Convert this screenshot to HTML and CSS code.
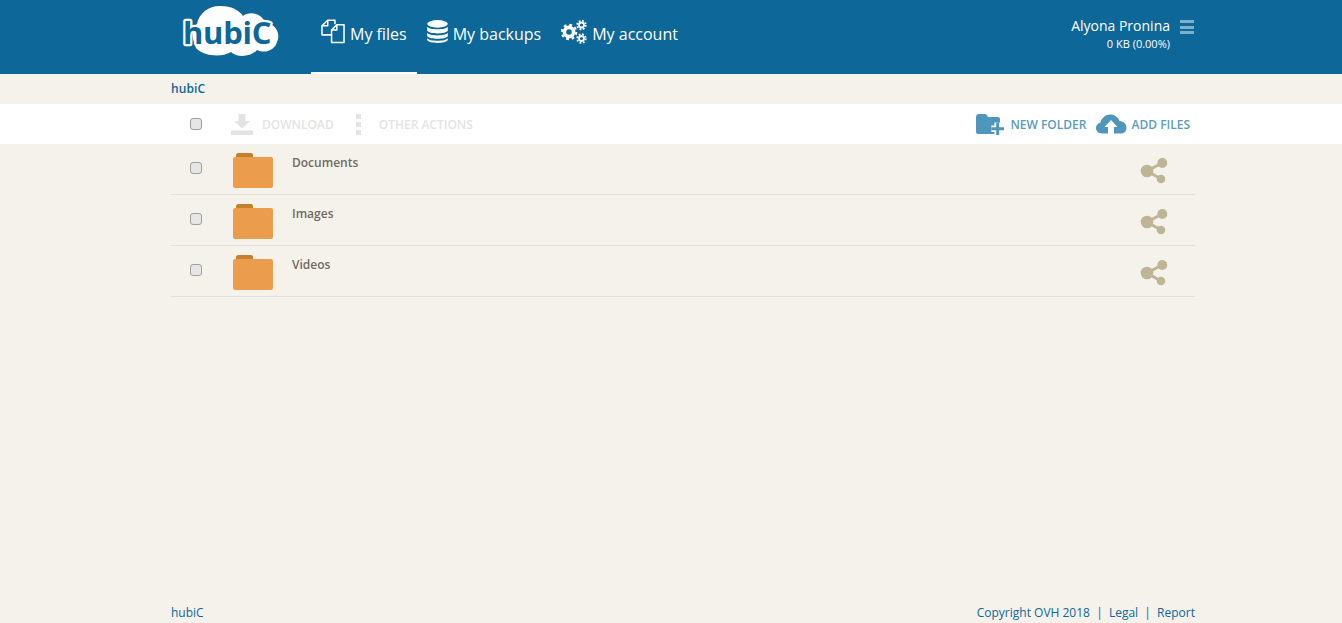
FILE: index.html
```html
<!DOCTYPE html>
<html lang="en">
<head>
<meta charset="utf-8">
<title>hubiC</title>
<link rel="stylesheet" href="styles.css">
</head>
<body>
<svg class="defs" width="0" height="0" aria-hidden="true">
  <defs>
    <symbol id="share" viewBox="0 0 28 26">
      <path d="M7 13 L22 5 M7 13 L21 21" stroke="#beb596" stroke-width="3" fill="none"/>
      <circle cx="7" cy="13" r="6.300" fill="#beb596"/>
      <circle cx="22.300" cy="5" r="5" fill="#beb596"/>
      <circle cx="21" cy="21" r="4.300" fill="#beb596"/>
    </symbol>
    <symbol id="folder" viewBox="0 0 40 35">
      <path d="M3 2.500 Q3 0 5.500 0 H18 Q20 0 20 2 V5 H3 Z" fill="#c67f2b"/>
      <path d="M0 6 Q0 4 2 4 H38 Q40 4 40 6 V33 Q40 35 38 35 H2 Q0 35 0 33 Z" fill="#eb9c4d"/>
    </symbol>
  </defs>
</svg>
<header class="topbar">
  <div class="wrap topbar-inner">
    <a class="logo" href="#" aria-label="hubiC">
      <svg width="100" height="58" viewBox="0 0 100 58">
        <path d="M15 48 C10 36 10 28 16 24 C18 12 30 5 40 6 C50 6 58 10 62 16 C68 11 80 13 84 22 C95 24 100 34 96 42 C94 50 84 54 76 50 C70 57 56 58 50 52 C40 58 22 56 15 48 Z" fill="#fff"/>
        <text class="logo-text" x="2" y="44">hubiC</text>
      </svg>
    </a>
    <nav class="mainnav">
      <a class="navitem active" href="#">
        <svg class="navicon" width="24" height="25" viewBox="0 0 25 25" fill="none" stroke="#fff" stroke-width="1.600" stroke-linejoin="round">
          <path d="M11 16 H1 V6.500 L7 .8 H14.500 V5"/>
          <path d="M7 .8 V6.500 H1"/>
          <path d="M11 24 H24 V5.500 H16.500 L11 11 Z"/>
          <path d="M16.500 5.500 V11 H11"/>
        </svg>
        <span>My files</span>
      </a>
      <a class="navitem" href="#">
        <svg class="navicon" width="21" height="25" viewBox="0 0 22 25" fill="#fff">
          <ellipse cx="11" cy="4.500" rx="10.800" ry="4"/>
          <path d="M.2 7.500 C2 11 20 11 21.800 7.500 V11.500 C20 15.500 2 15.500 .2 11.500 Z"/>
          <path d="M.2 13.800 C2 17.500 20 17.500 21.800 13.800 V17.500 C20 21 2 21 .2 17.500 Z"/>
          <path d="M.2 19.500 C2 23 20 23 21.800 19.500 V21.500 C20 25.500 2 25.500 .2 21.500 Z"/>
        </svg>
        <span>My backups</span>
      </a>
      <a class="navitem" href="#">
        <svg class="navicon" width="26" height="25" viewBox="0 0 26 25" fill="none" stroke="#fff">
          <circle cx="8" cy="13" r="4.600" stroke-width="3.600"/>
          <circle cx="8" cy="13" r="7.200" stroke-width="2.200" stroke-dasharray="2.830 2.830"/>
          <circle cx="20.500" cy="6" r="2.500" stroke-width="1.800"/>
          <circle cx="20.500" cy="6" r="4.300" stroke-width="1.800" stroke-dasharray="1.800 1.580"/>
          <circle cx="20.500" cy="19.500" r="2.500" stroke-width="1.800"/>
          <circle cx="20.500" cy="19.500" r="4.300" stroke-width="1.800" stroke-dasharray="1.800 1.580"/>
        </svg>
        <span>My account</span>
      </a>
    </nav>
    <div class="account">
      <div class="account-text">
        <div class="account-name">Alyona Pronina</div>
        <div class="account-quota">0 KB (0.00%)</div>
      </div>
      <div class="burger" aria-hidden="true"><i></i><i></i><i></i></div>
    </div>
  </div>
</header>

<div class="wrap crumb"><a href="#">hubiC</a></div>

<div class="toolbar">
  <div class="wrap toolbar-inner">
    <span class="cell-check"><input type="checkbox" class="check"></span>
    <a class="tool disabled tool-download" href="#">
      <svg width="22" height="21" viewBox="0 0 22 21" fill="#e3e3e3">
        <path d="M7.500 0 H14.500 V7 H19 L11 14.500 L3 7 H7.500 Z"/>
        <path d="M0 16.500 H22 V21 H0 Z"/>
      </svg>
      <span>DOWNLOAD</span>
    </a>
    <a class="tool disabled tool-other" href="#">
      <span class="dots" aria-hidden="true"><i></i><i></i><i></i></span>
      <span>OTHER ACTIONS</span>
    </a>
    <div class="tool-spacer"></div>
    <a class="tool action tool-folder" href="#">
      <svg width="28" height="21" viewBox="0 0 28 21">
        <path d="M0 3 Q0 0 3 0 H9 Q11 0 12 3 H22 Q24 3 24 5 V20 H2 Q0 20 0 18 Z" fill="#4f96bd"/>
        <path d="M21.700 8.500 V21 M15.400 14.700 H28" stroke="#fff" stroke-width="6.500" fill="none"/>
        <path d="M21.700 8.500 V21 M15.400 14.700 H28" stroke="#4f96bd" stroke-width="3" fill="none"/>
      </svg>
      <span>NEW FOLDER</span>
    </a>
    <a class="tool action tool-add" href="#">
      <svg width="31" height="20" viewBox="0 0 31 20">
        <path d="M6 19.500 C-1.500 19.500 -2 10 4.500 8.500 C6 2 14 -2 20 2.500 C22 4 23 5 23.500 7 C31.500 7 33 18.500 26 19.500 H18 V13 H21.500 L15 6 L8.500 13 H12 V19.500 Z" fill="#4f96bd"/>
      </svg>
      <span>ADD FILES</span>
    </a>
  </div>
</div>

<main class="wrap list">
  <div class="row">
    <span class="cell-check"><input type="checkbox" class="check"></span>
    <svg class="folder"><use href="#folder"/></svg>
    <a class="name" href="#">Documents</a>
    <svg class="share"><use href="#share"/></svg>
  </div>
  <div class="row">
    <span class="cell-check"><input type="checkbox" class="check"></span>
    <svg class="folder"><use href="#folder"/></svg>
    <a class="name" href="#">Images</a>
    <svg class="share"><use href="#share"/></svg>
  </div>
  <div class="row">
    <span class="cell-check"><input type="checkbox" class="check"></span>
    <svg class="folder"><use href="#folder"/></svg>
    <a class="name" href="#">Videos</a>
    <svg class="share"><use href="#share"/></svg>
  </div>
</main>

<footer class="wrap footer">
  <a class="footer-brand" href="#">hubiC</a>
  <div class="footer-links">
    <span>Copyright OVH 2018</span><span class="sep">|</span><a href="#">Legal</a><span class="sep">|</span><a href="#">Report</a>
  </div>
</footer>
</body>
</html>
```
FILE: styles.css
```css
* { box-sizing: border-box; }
html, body { height: 100%; }
body {
  margin: 0;
  background: #f5f2eb;
  font-family: "Open Sans", "Liberation Sans", sans-serif;
  font-size: 12px;
  color: #6b625a;
  display: flex;
  flex-direction: column;
  overflow: hidden;
}
a { color: inherit; text-decoration: none; }
.defs { position: absolute; }
.wrap { width: 1024px; margin-left: 171px; }

.topbar { height: 74px; background: #0d6799; flex: none; }
.topbar-inner { display: flex; height: 74px; }
.logo { width: 140px; padding: 0 0 0 10px; display: block; flex: none; }
.logo svg { display: block; overflow: visible; }
.logo-text {
  font-family: "Open Sans", sans-serif;
  font-weight: 700;
  font-size: 31px;
  letter-spacing: -0.300px;
  fill: #0d6799;
  stroke: #fff;
  stroke-width: 4.500px;
  stroke-linejoin: round;
  paint-order: stroke;
}
.mainnav { display: flex; gap: 0; }
.navitem {
  display: flex;
  align-items: center;
  height: 74px;
  padding: 0 10px 4px;
  color: #fff;
  font-size: 16px;
  gap: 5px;
  border-bottom: 2px solid transparent;
}
.navitem.active { border-bottom-color: #fff; }
.navicon { flex: none; margin-top: -6px; }
.account { margin-left: auto; display: flex; align-items: flex-start; padding-top: 16px; }
.account-text { text-align: right; color: #fff; }
.account-name { font-size: 14px; line-height: 20px; }
.account-quota { font-size: 11px; line-height: 16px; margin-top: 0; }
.burger { width: 14px; margin: 4px 1px 0 10px; display: flex; flex-direction: column; gap: 2.500px; }
.burger i { display: block; height: 3px; background: #7fb0cb; }

.crumb { height: 30px; line-height: 29px; flex: none; color: #0d6799; font-size: 12px; font-weight: 600; letter-spacing: .1px; }

.toolbar { height: 40px; background: #fff; flex: none; }
.toolbar-inner { display: flex; align-items: center; height: 40px; }
.cell-check { width: 50px; display: flex; justify-content: center; flex: none; }
.check {
  appearance: none;
  margin: 0;
  width: 12px;
  height: 12px;
  border: 1px solid #a0a0a0;
  border-radius: 3px;
  background: #e6e6e6;
  display: block;
}
.tool { display: flex; align-items: center; font-size: 12px; font-weight: 600; }
.disabled { color: #e3e3e3; }
.tool-download { margin-left: 10px; gap: 9px; }
.tool-other { margin-left: 22px; gap: 18px; }
.dots { display: flex; flex-direction: column; gap: 3px; width: 5px; }
.dots i { display: block; width: 5px; height: 5px; background: #e3e3e3; }
.tool-spacer { flex: 1; }
.action { color: #5a9cc0; }
.tool-folder { gap: 6px; }
.tool-add { margin-left: 10px; gap: 4px; margin-right: 5px; }

.row { display: flex; height: 51px; align-items: flex-start; border-bottom: 1px solid #e4e0d8; position: relative; }
.row .cell-check { padding-top: 18px; }
.folder { width: 40px; height: 35px; margin: 9px 0 0 12px; flex: none; }
.name { margin: 10px 0 0 19px; font-size: 12px; font-weight: 600; line-height: 17px; color: #706a64; }
.share { width: 28px; height: 26px; margin: 14px 27px 0 auto; flex: none; }

.list { flex: none; }
.footer {
  margin-top: auto;
  height: 20px;
  display: flex;
  justify-content: space-between;
  align-items: flex-start;
  color: #0d6799;
  line-height: 20px;
}
.footer-links .sep { margin: 0 6.200px; }
```
